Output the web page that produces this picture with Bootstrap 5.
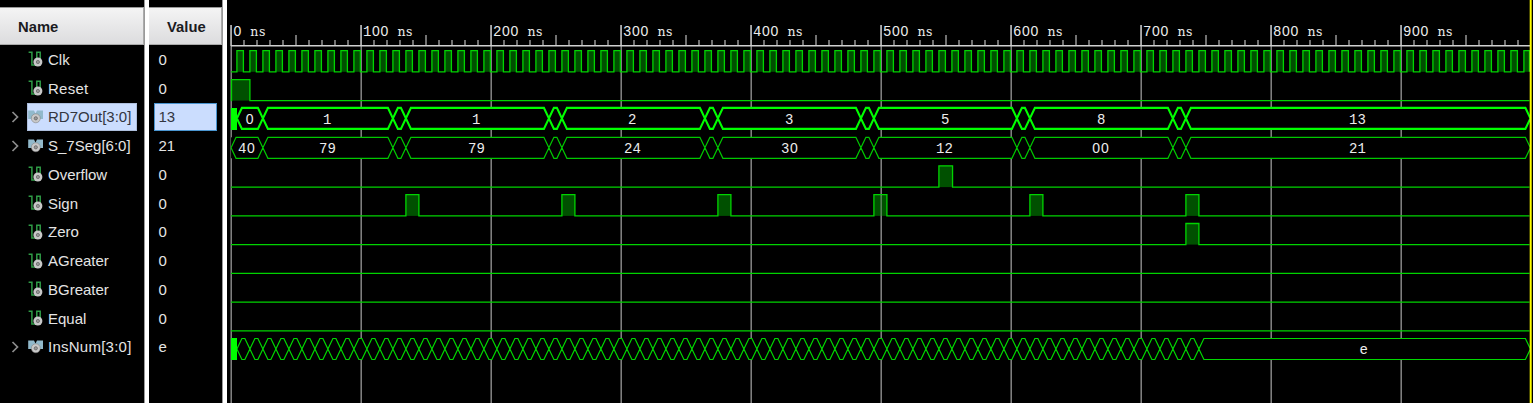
<!DOCTYPE html>
<html lang="en">
<head>
<meta charset="utf-8">
<title>Waveform viewer</title>
<link href="https://cdn.jsdelivr.net/npm/bootstrap@5.3.0/dist/css/bootstrap.min.css" rel="stylesheet">
<script src="https://cdn.jsdelivr.net/npm/bootstrap@5.3.0/dist/js/bootstrap.bundle.min.js"></script>
<style>
body{background:#000;font-family:"Liberation Sans",Arial,sans-serif;font-size:15px;line-height:1;color:#e4e4e4;overflow:hidden}
.viewer{height:403px}
.pane-names{width:144px}
.pane-values{width:73px}
.splitter{width:5px;background:#fff;border-left:1px solid #999}
.pane-head{height:38px;margin-top:7px;padding:2px 0 0 18px;background:linear-gradient(#f4f4f4,#dcdcde);border-top:1px solid #999;border-bottom:1px solid #aaa;border-right:1px solid #aaa;color:#1b1b1f;font-weight:bold;font-size:14.8px}
.sig{height:28.76px}
.chev{width:27px;padding-left:11px}
.label-box{height:28.76px;width:110px;border:1px solid transparent}
.label-box svg{flex:none}
.val-box{height:28.76px;width:63px;padding-left:3.5px;margin-left:5px;border:1px solid transparent}
.picked{background:#cbddfe;color:#33363f;border-color:#aebfdd}
.val-box.picked{border-color:#4a95d0}
.sig span{white-space:nowrap}
.wider{letter-spacing:.25px}
.wave text{font-family:"Liberation Mono",monospace;font-size:14px;fill:#ececec}
.wave .round{font-family:"Liberation Sans",sans-serif;font-size:14px}
.wave .unit{font-family:"DejaVu Serif",serif;font-size:12.5px}
</style>
</head>
<body>
<svg width="0" height="0" class="position-absolute">
<symbol id="scalar" viewBox="0 0 16 16"><path d="M.6 1.2H3.9V14H8M8.8 10V1.2H12.2V8" fill="none" stroke="#2f9c46" stroke-width="1.5"/><circle cx="9.9" cy="11" r="4.5" fill="#c8c8c8"/><circle cx="9.9" cy="11" r="1.6" fill="#999" stroke="#666" stroke-width=".8"/></symbol>
<symbol id="vector" viewBox="0 0 16 16"><path d="M.2 1.5H6L7.5 4.5L9 1.5H15V10H11L7.5 7L5 10H.2Z" fill="#91b9cb"/><circle cx="7.8" cy="9.3" r="4.5" fill="#c8c8c8" stroke="#777" stroke-width=".5"/><circle cx="7.8" cy="9.3" r="1.6" fill="#999" stroke="#666" stroke-width=".8"/></symbol>
</svg>
<main class="viewer d-flex">
<section class="pane-names flex-shrink-0"><div class="pane-head d-flex align-items-center"><span>Name</span></div><div id="names"></div></section>
<div class="splitter flex-shrink-0"></div>
<section class="pane-values flex-shrink-0"><div class="pane-head d-flex align-items-center"><span>Value</span></div><div id="values"></div></section>
<div class="splitter flex-shrink-0"></div>
<section class="wave flex-grow-1"><svg id="plot" class="d-block" width="1306" height="403" viewBox="227 0 1306 403"></svg></section>
</main>
<script>
const signals=[['Clk','0'],['Reset','0'],['RD7Out[3:0]','13',1],['S_7Seg[6:0]','21',1],['Overflow','0'],['Sign','0'],['Zero','0'],['AGreater','0'],['BGreater','0'],['Equal','0'],['InsNum[3:0]','e',1]];
document.getElementById('names').innerHTML=signals.map((s,i)=>`<div class="sig d-flex align-items-center"><div class="chev">${s[2]?'<svg class="d-block" width="9" height="12" viewBox="0 0 9 12"><path d="M1.5 1L6.5 6L1.5 11" fill="none" stroke="#8c8c8c" stroke-width="1.7"/></svg>':''}</div><div class="label-box d-flex align-items-center ${i==2?'picked':''}"><svg width="16" height="16" class="me-1"><use href="#${s[2]?'vector':'scalar'}"/></svg><span class="${i==10||i==1?'wider':''}">${s[0]}</span></div></div>`).join('');
document.getElementById('values').innerHTML=signals.map((s,i)=>`<div class="sig d-flex align-items-center"><div class="val-box d-flex align-items-center ${i==2?'picked':''}"><span>${s[1]}</span></div></div>`).join('');

const X=t=>230.4+1.3*t, END=1529.5;
let out='';
const line=(d,c,w)=>{out+=`<path d="${d}" fill="none" stroke="${c}" stroke-width="${w}"/>`};
// Characters sit on a fixed pitch; zeros are drawn undotted and the unit has serifs.
const label=(s,x,y)=>{
  const xs=[...s].map((c,i)=>(x+i*8.6+(c=='0'?.3:0)).toFixed(1)).join(' ');
  out+=`<text y="${y}" x="${xs}">${s.replace(/0/g,'<tspan class="round">0</tspan>').replace('ns','<tspan class="unit">ns</tspan>')}</text>`};
// Time grid and ruler
for(let t=0;t<1000;t+=100)line(`M${X(t)+.8} 25V403`,'#868686',1.5);
line('M231 45.8H1530','#d0d0d0',1.5);
for(let t=0;t<1000;t+=10)line(`M${X(t)+.6} ${t%100==0?25:t%50==0?35:40}V46`,'#d0d0d0',1.1);
for(let t=0;t<1000;t+=100)label(t+' ns',X(t)+2.7,36);
// Scalar traces
function scalar(hi,lo,pulses){
  let d=`M231 ${lo}`;
  for(const [a,b] of pulses){
    const xa=Math.max(231.5,X(a)),xb=Math.min(END,X(b));
    out+=`<rect x="${xa}" y="${hi}" width="${xb-xa}" height="${lo-hi}" fill="#005000"/>`;
    d+=`H${xa}V${hi}H${xb}V${lo}`;
  }
  line(d+`H${END}`,'#00d400',1.3);
}
scalar(50.7,71.8,Array.from({length:100},(_,i)=>[i*10+5,i*10+10]));
scalar(79.7,100.6,[[0,15]]);
scalar(165.8,187.1,[[545,555.5]]);
scalar(194.7,215.9,[135,255,375,495,615,735].map(t=>[t,t+10]));
scalar(223.5,244.6,[[735,745]]);
scalar(252,273.3,[]);scalar(281,302.1,[]);scalar(310,330.8,[]);
line(`M${X(500)+.8} 195V216`,'rgba(150,170,150,.6)',1.5);
// Bus traces
function bus(hi,lo,cuts,w,c){
  const m=(hi+lo)/2;
  out+=`<rect x="${X(cuts[0])}" y="${hi}" width="${END-X(cuts[0])}" height="${lo-hi}" fill="#000"/>`;
  let d='';
  // Both rails swap at every cut, so the traces cross there.
  cuts.slice(0,-1).forEach((t,i)=>{const a=X(t),b=X(cuts[i+1]);
    for(const y of [hi,lo])d+=`M${a} ${m}L${a+5} ${y}H${b-5}L${b} ${m}`;});
  line(d,c,w);
}
const cuts=[25,125,135,245,255,365,375,485,495,605,615,725,735,1000];
bus(107.9,128.9,[5,...cuts],2.1,'#00ff00');
bus(137.3,158.3,[0.5,...cuts],1.2,'#00c800');
bus(338.5,359.5,[...Array.from({length:75},(_,i)=>i*10+5),1000],1.2,'#00d800');
out+='<path d="M231 108H237V130H231ZM231 338H237V360H231Z" fill="#00ff00"/>';
[['0',245.5],['1',323],['1',472],['2',628],['3',785],['5',941],['8',1097]].forEach(([s,x])=>label(s,x,124));
label('13',1349,124);
[['40',238],['79',319],['79',468],['24',624],['30',781],['12',936],['00',1092],['21',1349]].forEach(([s,x])=>label(s,x,153));
label('e',1359.5,354);
line('M1530.7 0V403','#ffff00',2);
document.getElementById('plot').innerHTML=out;
</script>
</body>
</html>
